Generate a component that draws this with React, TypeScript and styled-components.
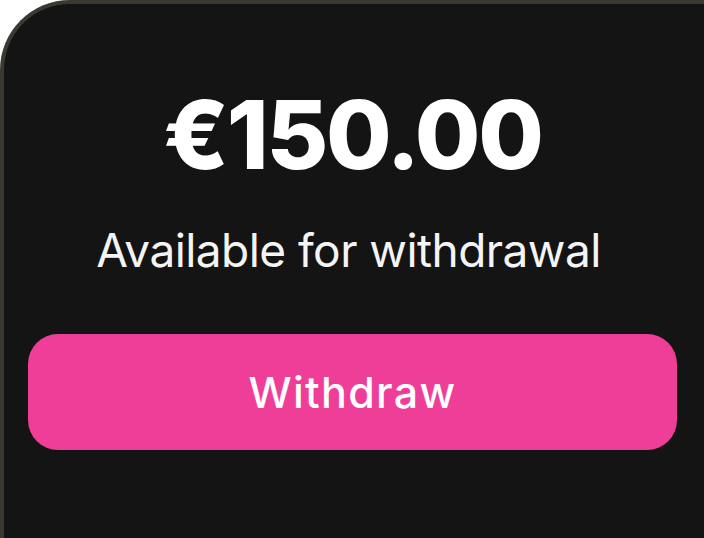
import React from "react";
import styled, { createGlobalStyle } from "styled-components";

const Global = createGlobalStyle`
  html, body { margin: 0; padding: 0; background: #ffffff; overflow: hidden; }
  body { font-family: "Inter", "Liberation Sans", sans-serif; }
`;

const Card = styled.section`
  box-sizing: border-box;
  width: 704px;
  height: 538px;
  background: #141414;
  border: 4px solid #3c3932;
  border-right-width: 0;
  border-bottom-width: 0;
  border-top-left-radius: 70px;
  padding: 83px 27px 0 24px;
  display: flex;
  flex-direction: column;
  align-items: center;
`;

const Amount = styled.div`
  font-family: "Inter", "Liberation Sans", sans-serif;
  font-weight: 800;
  font-size: 95px;
  line-height: 1;
  letter-spacing: -2.3px;
  color: #ffffff;
`;

const Caption = styled.div`
  margin-top: 45px;
  margin-right: 8px;
  font-family: "Inter", "Liberation Sans", sans-serif;
  font-weight: 400;
  font-size: 46px;
  line-height: 1;
  letter-spacing: -0.55px;
  color: #f4f4f4;
`;

const Button = styled.button`
  margin-top: 61px;
  width: 100%;
  height: 116px;
  border: none;
  border-radius: 30px;
  background: #ef3e98;
  color: #ffffff;
  font-family: "Inter", "Liberation Sans", sans-serif;
  font-weight: 500;
  font-size: 43px;
  line-height: 1;
  letter-spacing: 1.3px;
  cursor: pointer;
`;

export default function App() {
  return (
    <>
      <Global />
      <Card>
        <Amount>€150.00</Amount>
        <Caption>Available for withdrawal</Caption>
        <Button>Withdraw</Button>
      </Card>
    </>
  );
}
